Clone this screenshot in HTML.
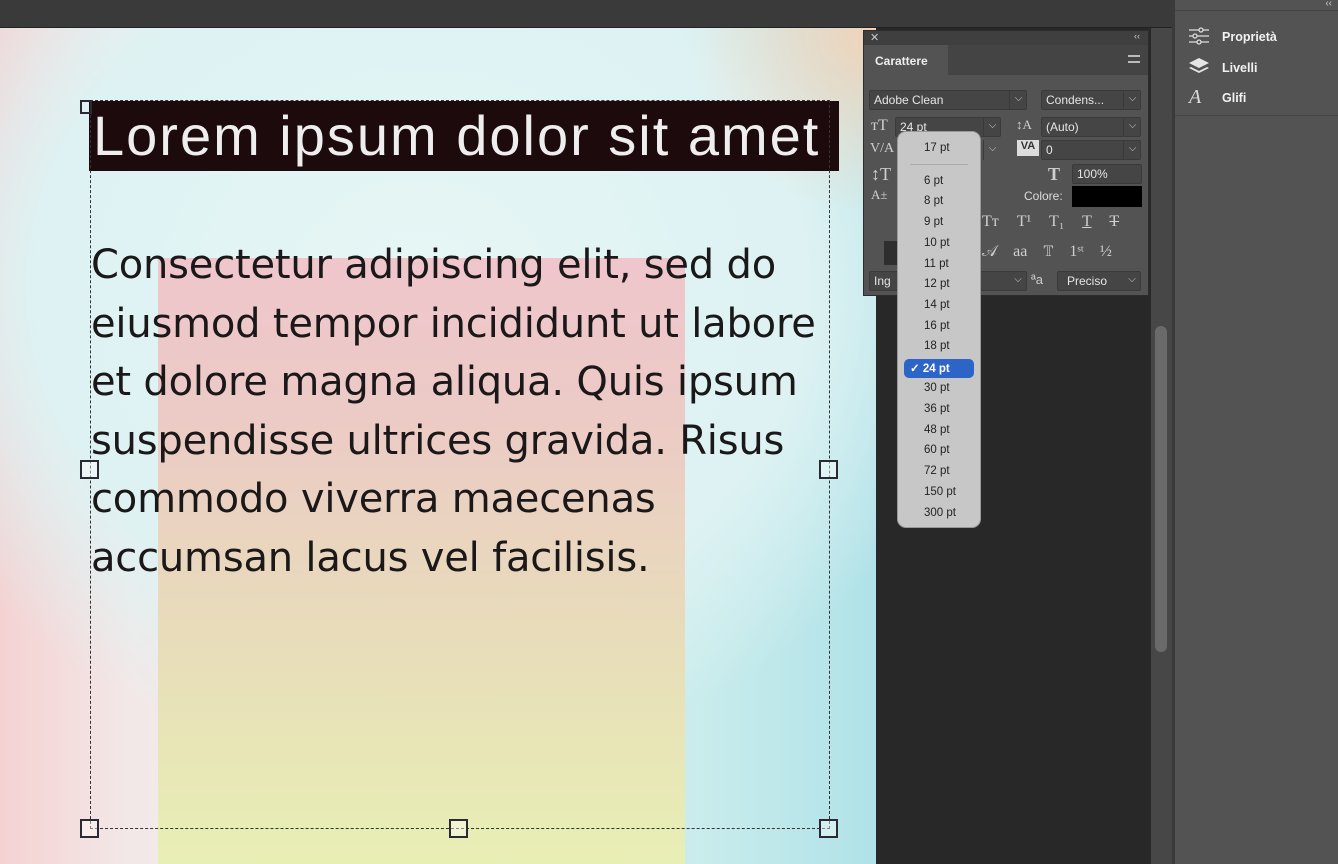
<!DOCTYPE html>
<html><head><meta charset="utf-8"><style>
*{margin:0;padding:0;box-sizing:border-box}
body{width:1338px;height:864px;overflow:hidden;background:#282828;position:relative;font-family:"Liberation Sans",sans-serif}
.a{position:absolute}
.topbar{left:0;top:0;width:1172px;height:28px;background:#3a3a3a;border-bottom:1px solid #222}
.canvas{left:0;top:28px;width:876px;height:836px;overflow:hidden;
background:radial-gradient(ellipse 700px 600px at 420px 260px,#e6f6f5 0%,#def2f3 55%,rgba(222,242,243,0) 80%),
linear-gradient(90deg,#f4d2d2 0%,#f3e8e8 15%,#e2f2f0 50%,#c9ecec 80%,#b0e2e8 100%);}
.rect{left:158px;top:230px;width:527px;height:620px;background:linear-gradient(180deg,#efc6cc 0%,#eccac6 25%,#e8dcba 60%,#e8f0b4 100%)}
.peach{right:0;top:0;width:200px;height:180px;background:radial-gradient(circle at 100% 0,#f3d3b8 0%,rgba(243,211,184,0) 70%)}
.title{left:89px;top:73px;width:750px;height:70px;background:#1d0a0c;color:#eee;font-size:56px;line-height:70px;padding-left:4px;letter-spacing:2px;white-space:nowrap;overflow:hidden}
.body{left:91px;top:208px;color:#1a1818;font-size:40px;line-height:58.6px;font-family:"DejaVu Sans",sans-serif;letter-spacing:-0.2px;white-space:pre}
.dash{border:1px dashed #333}
.h{width:19px;height:19px;border:2px solid #2a2a35;background:rgba(255,255,255,.4)}
.panel{left:863px;top:30px;width:286px;height:266px;background:#535353;border:1px solid #2c2c2c}
.ptop{left:0;top:0;width:284px;height:14px;background:#3f3f3f;color:#ccc;font-size:11px}
.tab{left:0;top:14px;width:84px;height:30px;background:#535353;color:#eee;font-weight:bold;font-size:12px;padding:9px 0 0 11px}
.tabbar{left:84px;top:14px;width:200px;height:30px;background:#444}
.fld{height:20px;background:#454545;border:1px solid #3a3a3a;color:#e6e6e6;font-size:12px;padding:2px 4px;border-radius:2px}
.dd{width:18px;height:20px;border-left:1px solid #3a3a3a;color:#ccc;font-size:10px;text-align:center;line-height:18px}
.ic{color:#cfcfcf;font-size:16px;font-family:"Liberation Serif",serif}
.menu{left:897px;top:131px;width:84px;height:397px;background:#c7c7c7;border-radius:9px;border:1px solid #999;font-size:11.5px;color:#222}
.menu div{position:absolute;left:26px}
.sel{left:6px!important;top:227px;width:70px;height:19px;background:#2c64c8;border-radius:5px;color:#fff;font-weight:bold;padding:2px 0 0 6px}
.rp{left:1175px;top:0;width:163px;height:864px;background:#535353}
.rp .it{position:absolute;left:47px;color:#f2f2f2;font-weight:bold;font-size:12.5px}
</style></head><body>
<div class="a topbar"></div>
<div class="a canvas">
 <div class="a peach"></div>
 <div class="a rect"></div>
 <div class="a title">Lorem ipsum dolor sit amet</div>
 <div class="a body">Consectetur adipiscing elit, sed do
eiusmod tempor incididunt ut labore
et dolore magna aliqua. Quis ipsum
suspendisse ultrices gravida. Risus
commodo viverra maecenas
accumsan lacus vel facilisis.</div>
 <div class="a dash" style="left:90px;top:72px;width:740px;height:729px"></div>
 <div class="a h" style="left:80px;top:432px"></div>
 <div class="a h" style="left:819px;top:432px"></div>
 <div class="a h" style="left:80px;top:791px"></div>
 <div class="a h" style="left:449px;top:791px"></div>
 <div class="a h" style="left:819px;top:791px"></div>
 <div class="a" style="left:80px;top:72px;width:12px;height:14px;border:2px solid #2a2a35"></div>
</div>
<div class="a" style="left:1151px;top:28px;width:21px;height:836px;background:#474747"></div>
<div class="a" style="left:1155px;top:326px;width:12px;height:326px;background:#6a6a6a;border-radius:6px"></div>
<div class="a" style="left:1172px;top:0;width:3px;height:864px;background:#3a3a3a"></div>

<div class="a panel">
 <div class="a ptop"><span class="a" style="left:6px;top:0">✕</span><span class="a" style="right:8px;top:0;font-size:9px">‹‹</span></div>
 <div class="a tabbar"></div>
 <div class="a tab">Carattere</div>
 <div class="a" style="left:264px;top:24px;width:12px;height:8px;border-top:2px solid #bbb;border-bottom:2px solid #bbb"></div>
 <div class="a fld" style="left:5px;top:59px;width:158px">Adobe Clean</div>
 <div class="a dd" style="left:145px;top:59px">⌵</div>
 <div class="a fld" style="left:177px;top:59px;width:100px">Condens...</div>
 <div class="a dd" style="left:259px;top:59px">⌵</div>
 <div class="a ic" style="left:7px;top:86px">ᴛT</div>
 <div class="a fld" style="left:31px;top:86px;width:106px">24 pt</div>
 <div class="a dd" style="left:119px;top:86px">⌵</div>
 <div class="a ic" style="left:152px;top:86px;font-size:13px">↕A</div>
 <div class="a fld" style="left:177px;top:86px;width:100px">(Auto)</div>
 <div class="a dd" style="left:259px;top:86px">⌵</div>
 <div class="a ic" style="left:6px;top:110px;font-size:14px">V/A</div>
 <div class="a dd" style="left:119px;top:109px">⌵</div>
 <div class="a" style="left:153px;top:109px;width:22px;height:16px;background:#ddd;color:#333;font-size:11px;font-weight:bold;text-align:center">VA</div>
 <div class="a fld" style="left:177px;top:109px;width:100px">0</div>
 <div class="a dd" style="left:259px;top:109px">⌵</div>
 <div class="a ic" style="left:7px;top:133px;font-size:18px">↕T</div>
 <div class="a ic" style="left:184px;top:133px;font-size:18px;font-weight:bold">T</div>
 <div class="a fld" style="left:208px;top:133px;width:70px">100%</div>
 <div class="a ic" style="left:7px;top:156px;font-size:13px">A±</div>
 <div class="a" style="left:160px;top:158px;color:#ddd;font-size:12px">Colore:</div>
 <div class="a" style="left:208px;top:155px;width:70px;height:21px;background:#000"></div>
 <div class="a ic" style="left:118px;top:182px;word-spacing:14px">Tт T¹ T₁ <u>T</u> <s>T</s></div>
 <div class="a" style="left:20px;top:210px;width:14px;height:24px;background:#2e2e2e"></div>
 <div class="a ic" style="left:118px;top:212px;word-spacing:12px">𝒜 aa 𝕋 1ˢᵗ ½</div>
 <div class="a fld" style="left:5px;top:240px;width:158px">Ing</div>
 <div class="a dd" style="left:145px;top:240px;border:none">⌵</div>
 <div class="a" style="left:167px;top:241px;color:#ccc;font-size:13px">ªa</div>
 <div class="a fld" style="left:193px;top:240px;width:84px;padding-left:9px">Preciso</div>
 <div class="a dd" style="left:259px;top:240px;border:none">⌵</div>
</div>

<div class="a menu">
 <div style="top:10px">17 pt</div>
 <div style="left:12px;top:32px;width:58px;height:1px;background:#aaa"></div>
 <div style="top:43px">6 pt</div><div style="top:63px">8 pt</div><div style="top:84px">9 pt</div>
 <div style="top:105px">10 pt</div><div style="top:126px">11 pt</div><div style="top:146px">12 pt</div>
 <div style="top:167px">14 pt</div><div style="top:188px">16 pt</div><div style="top:208px">18 pt</div>
 <div class="sel">✓ 24 pt</div>
 <div style="top:250px">30 pt</div><div style="top:271px">36 pt</div><div style="top:292px">48 pt</div>
 <div style="top:312px">60 pt</div><div style="top:333px">72 pt</div><div style="top:354px">150 pt</div>
 <div style="top:375px">300 pt</div>
</div>

<div class="a rp">
 <div class="a" style="right:6px;top:-2px;color:#ccc;font-size:10px">‹‹</div>
 <div class="a" style="left:0;top:10px;width:163px;height:1px;background:#444"></div>
 <svg class="a" style="left:13px;top:27px" width="22" height="18" stroke="#ddd" stroke-width="1.3" fill="none"><path d="M1 3h20M1 9h20M1 15h20"/><circle cx="13" cy="3" r="2" fill="#535353"/><circle cx="7" cy="9" r="2" fill="#535353"/><circle cx="11" cy="15" r="2" fill="#535353"/></svg>
 <div class="it" style="top:30px">Proprietà</div>
 <svg class="a" style="left:13px;top:57px" width="22" height="20" fill="#e6e6e6"><path d="M11 1l10 5-10 5-10-5z"/><path d="M3 10l8 4 8-4 2 1-10 5-10-5z"/></svg>
 <div class="it" style="top:61px">Livelli</div>
 <div class="a" style="left:14px;top:86px;color:#ddd;font-size:20px;font-style:italic;font-family:'Liberation Serif',serif">A</div>
 <div class="it" style="top:91px">Glifi</div>
 <div class="a" style="left:0;top:115px;width:163px;height:1px;background:#444"></div>
</div>
</body></html>
